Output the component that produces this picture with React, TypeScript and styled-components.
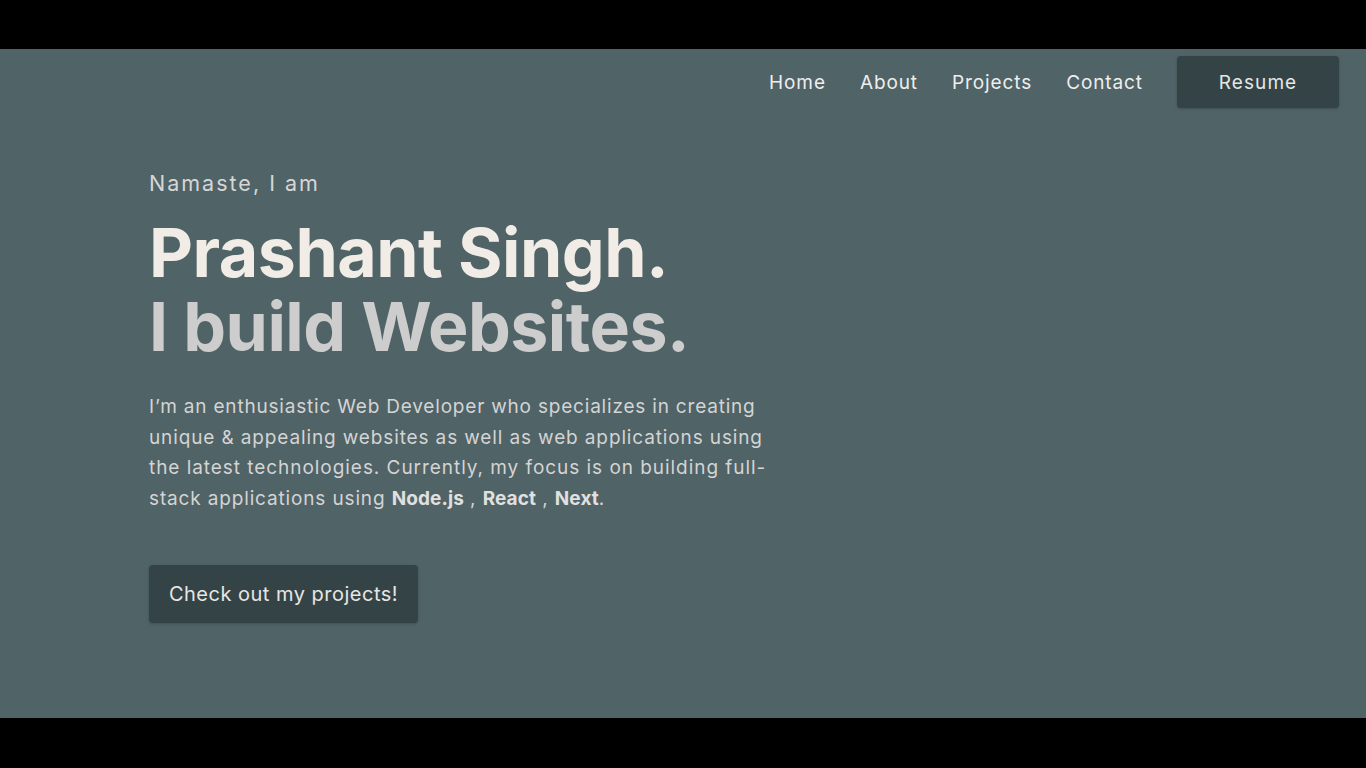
import React from "react";
import styled, { createGlobalStyle } from "styled-components";

const Global = createGlobalStyle`
  html, body { margin: 0; padding: 0; background: #000; }
  body { font-family: Inter, "Noto Sans", sans-serif; }
  * { box-sizing: border-box; }
`;

const Frame = styled.div`
  height: 768px;
  padding: 49px 0 50px;
  background: #000;
`;

const Page = styled.main`
  height: 100%;
  background: #506366;
  display: flex;
  flex-direction: column;
`;

const Nav = styled.nav`
  display: flex;
  justify-content: flex-end;
  align-items: center;
  gap: 34px;
  padding: 7px 27px 0 0;
`;

const NavLink = styled.a`
  color: #eeeeee;
  font-size: 19px;
  letter-spacing: 0.9px;
  text-decoration: none;
`;

const ResumeButton = styled.a`
  display: flex;
  align-items: center;
  justify-content: center;
  width: 162px;
  height: 52px;
  background: #344346;
  color: #e6e6e6;
  font-size: 19px;
  letter-spacing: 1.1px;
  border-radius: 4px;
  box-shadow: 0 1px 3px rgba(0, 0, 0, 0.2);
`;

const Hero = styled.section`
  padding: 62px 0 0 149px;
  display: flex;
  flex-direction: column;
`;

const Greeting = styled.p`
  margin: 0;
  color: #d6d6d6;
  font-size: 21.5px;
  letter-spacing: 2px;
  line-height: 26px;
`;

const Title = styled.h1`
  margin: 19px 0 0;
  font-size: 68px;
  font-weight: 700;
  line-height: 74px;
  letter-spacing: -0.5px;
`;

const Line = styled.span<{ $tone: string }>`
  display: block;
  color: ${(p) => p.$tone};
`;

const Bio = styled.p`
  margin: 29px 0 0;
  width: 660px;
  color: #d4d4d4;
  font-size: 19px;
  line-height: 30.5px;
`;

const BioLine = styled.span<{ $spacing: number }>`
  display: block;
  white-space: nowrap;
  letter-spacing: ${(p) => p.$spacing}px;
`;

const Tech = styled.b`
  font-weight: 700;
  color: #e0e0e0;
  letter-spacing: 0.1px;
`;

const CtaButton = styled.a`
  margin-top: 51px;
  align-self: flex-start;
  display: flex;
  align-items: center;
  justify-content: center;
  width: 269px;
  height: 58px;
  background: #344346;
  color: #e6e6e6;
  font-size: 20px;
  letter-spacing: 0.5px;
  border-radius: 4px;
  box-shadow: 0 1px 3px rgba(0, 0, 0, 0.2);
`;

export default function App() {
  return (
    <Frame>
      <Global />
      <Page>
        <Nav>
          <NavLink>Home</NavLink>
          <NavLink>About</NavLink>
          <NavLink>Projects</NavLink>
          <NavLink>Contact</NavLink>
          <ResumeButton>Resume</ResumeButton>
        </Nav>
        <Hero>
          <Greeting>Namaste, I am</Greeting>
          <Title>
            <Line $tone="#f1ece6">Prashant Singh.</Line>
            <Line $tone="#cdcdcd">I build Websites.</Line>
          </Title>
          <Bio>
            <BioLine $spacing={0.8}>I’m an enthusiastic Web Developer who specializes in creating</BioLine>
            <BioLine $spacing={0.87}>unique &amp; appealing websites as well as web applications using</BioLine>
            <BioLine $spacing={0.95}>the latest technologies. Currently, my focus is on building full-</BioLine>
            <BioLine $spacing={0.85}>
              stack applications using <Tech>Node.js</Tech> , <Tech>React</Tech> , <Tech>Next</Tech>.
            </BioLine>
          </Bio>
          <CtaButton>Check out my projects!</CtaButton>
        </Hero>
      </Page>
    </Frame>
  );
}
